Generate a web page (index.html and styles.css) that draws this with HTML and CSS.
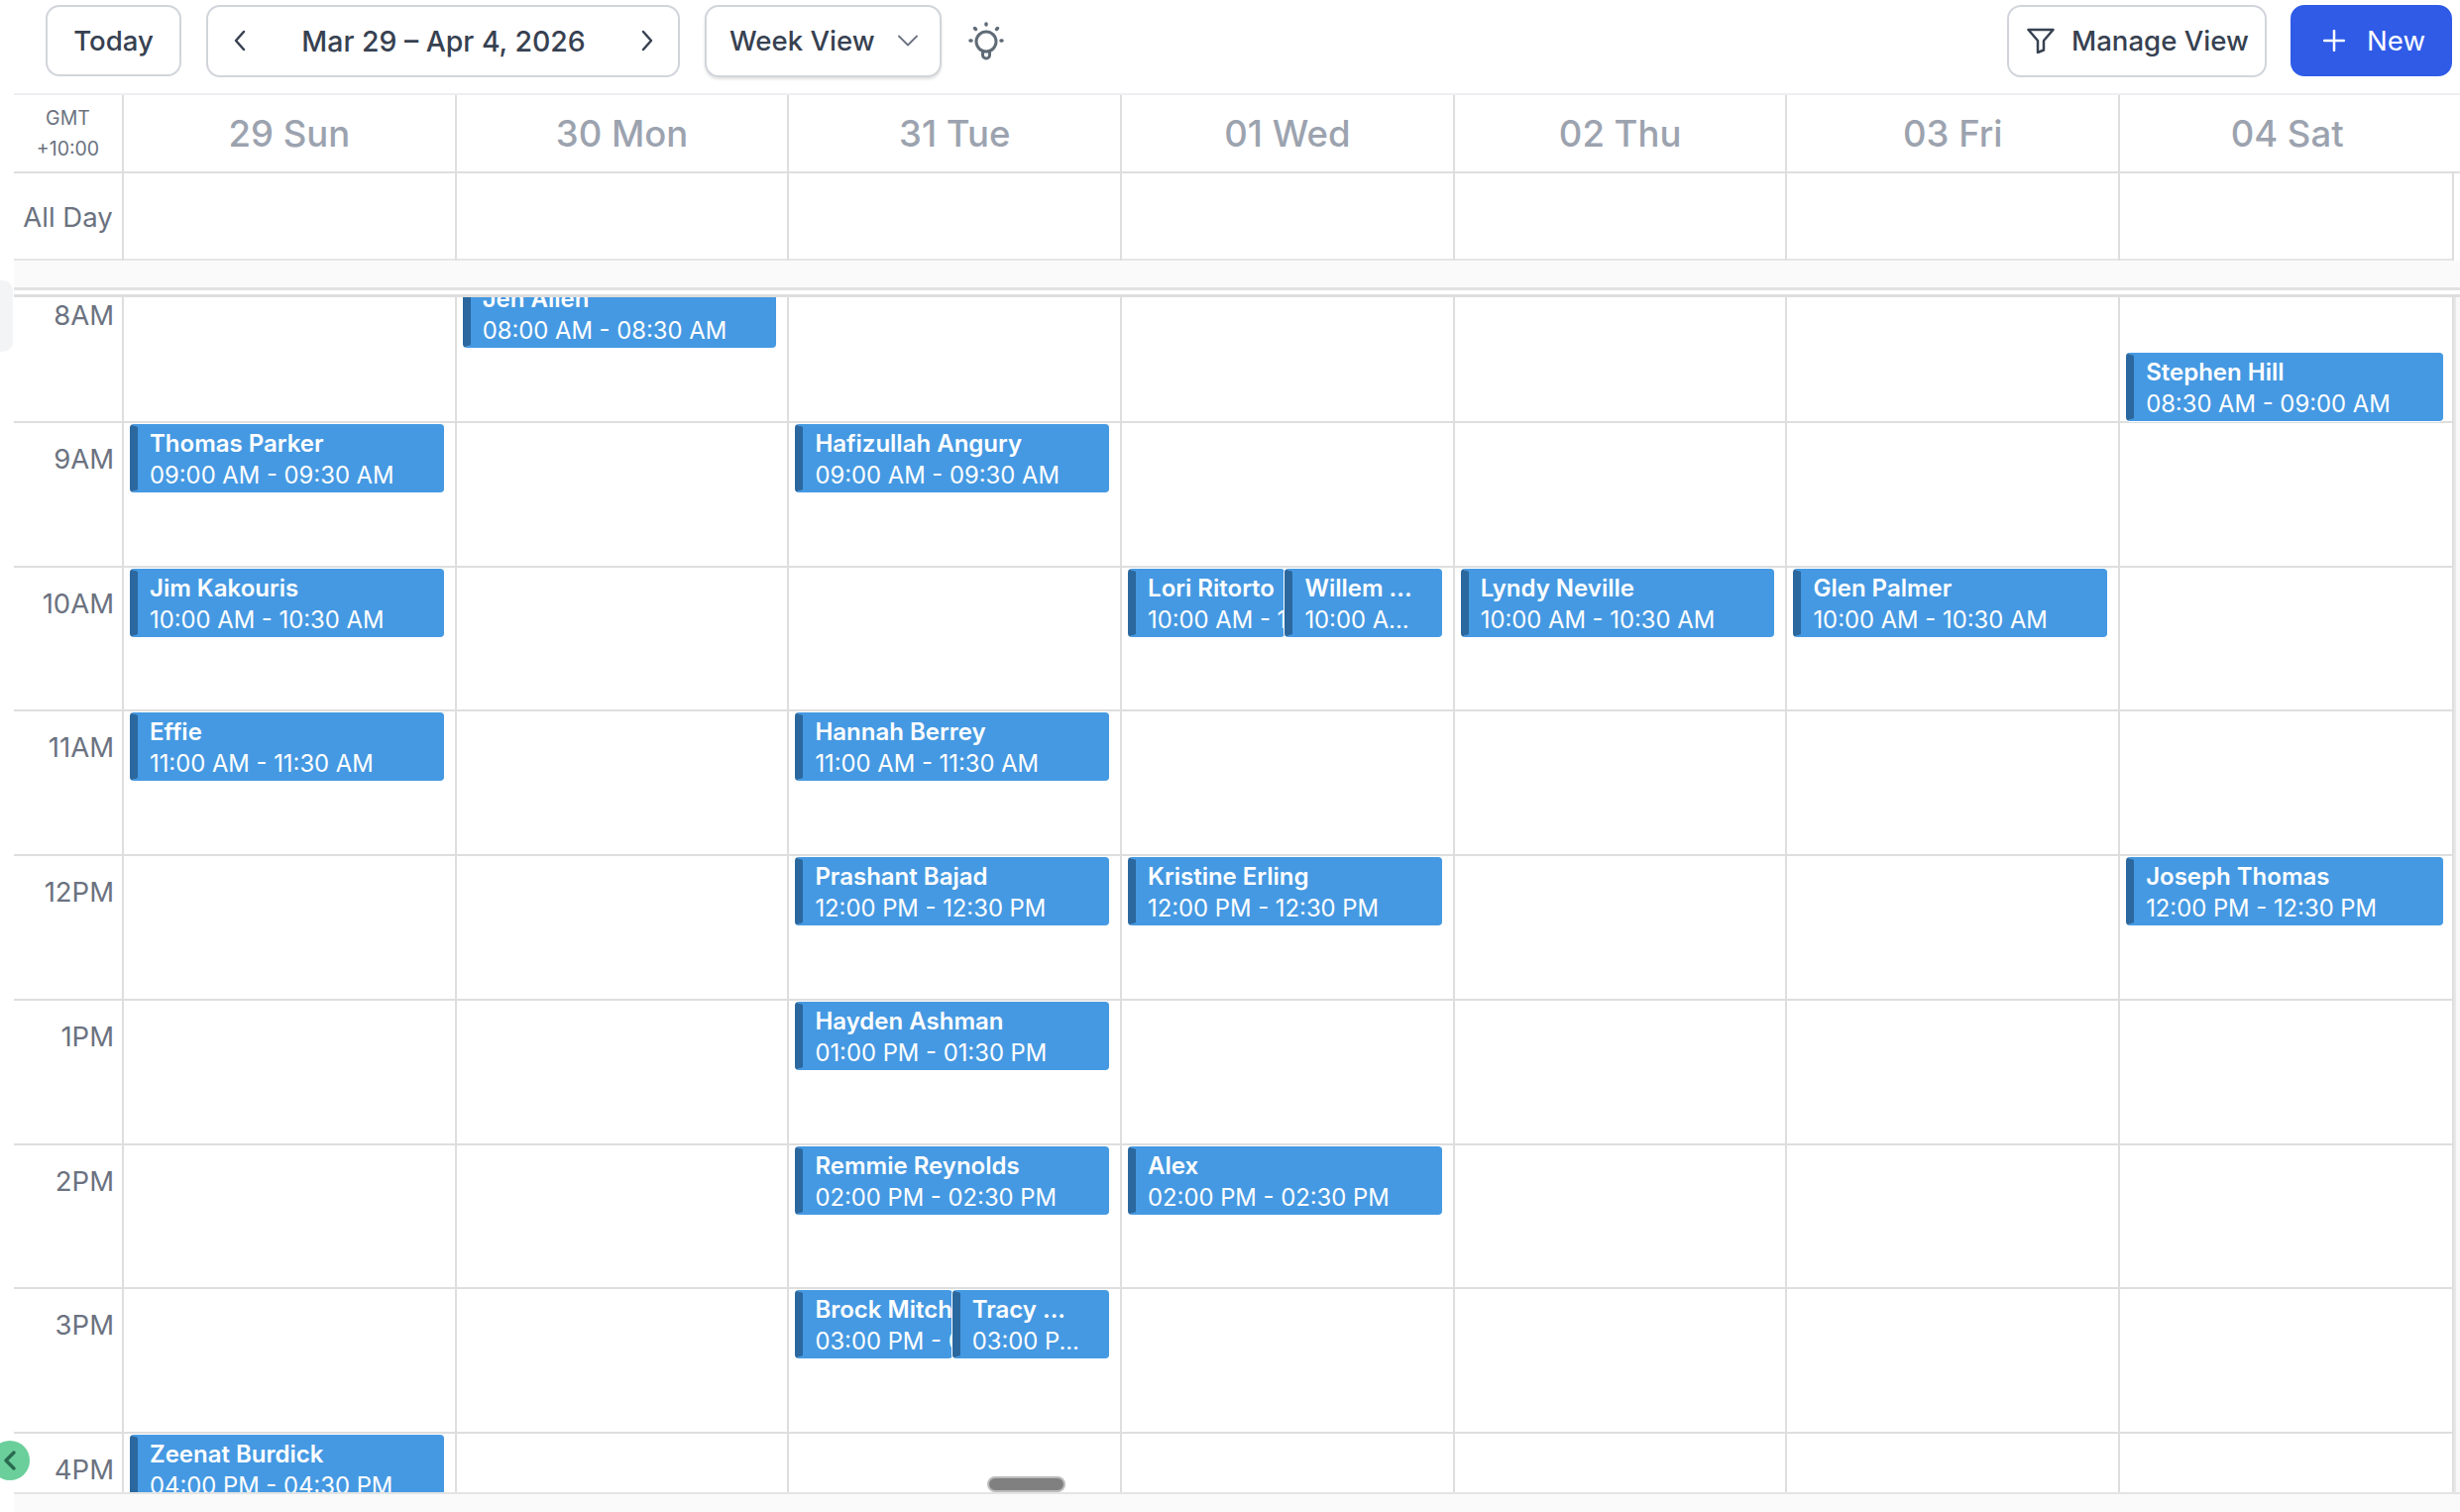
FILE: index.html
```html
<!DOCTYPE html>
<html lang="en">
<head>
<meta charset="utf-8">
<title>Week View</title>
<link rel="stylesheet" href="styles.css">
</head>
<body>
<div class="app">
  <header class="toolbar">
    <button class="btn today">Today</button>
    <div class="btn range">
      <svg class="chev" width="12" height="22" viewBox="0 0 12 22"><path d="M10 2 2 11l8 9"/></svg>
      <span>Mar 29 – Apr 4, 2026</span>
      <svg class="chev" width="12" height="22" viewBox="0 0 12 22"><path d="M2 2l8 9-8 9"/></svg>
    </div>
    <div class="btn view">
      <span>Week View</span>
      <svg class="caret" width="20" height="12" viewBox="0 0 20 12"><path d="M1 1.500 10 10.500 19 1.500"/></svg>
    </div>
    <svg class="bulb" width="36" height="44" viewBox="0 0 36 44">
      <circle cx="18" cy="23" r="10"/>
      <path d="M14.500 33.500v3a3.500 3.500 0 0 0 7 0v-3"/>
      <path class="ray" d="M18 5v1M6.500 9.500l1 1M29.500 9.500l-1 1M2 22h1M33 22h1"/>
    </svg>
    <div class="spacer"></div>
    <div class="btn manage">
      <svg class="funnel" width="28" height="26" viewBox="0 0 28 26"><path d="M1.500 2h25L17 13v9.500l-6 2.500V13z"/></svg>
      <span>Manage View</span>
    </div>
    <button class="btn new">
      <svg class="plus" width="22" height="22" viewBox="0 0 22 22"><path d="M11 1v20M1 11h20"/></svg>
      <span>New</span>
    </button>
  </header>

  <div class="week-head grid">
    <div class="gmt">GMT<br>+10:00</div>
    <div class="day">29 Sun</div>
    <div class="day">30 Mon</div>
    <div class="day">31 Tue</div>
    <div class="day">01 Wed</div>
    <div class="day">02 Thu</div>
    <div class="day">03 Fri</div>
    <div class="day last">04 Sat</div>
  </div>

  <div class="all-day grid">
    <div class="allday-label">All Day</div>
    <div class="c"></div><div class="c"></div><div class="c"></div><div class="c"></div><div class="c"></div><div class="c"></div><div class="c"></div>
  </div>

  <div class="band"></div>

  <div class="time-scroll">
    <div class="time-grid">

      <div class="row grid">
        <div class="hour first">8AM</div>
        <div class="c"></div>
        <div class="c"><div class="ev"><b>Jen Allen</b><span>08:00 AM - 08:30 AM</span></div></div>
        <div class="c"></div><div class="c"></div><div class="c"></div><div class="c"></div>
        <div class="c half"><div class="ev"><b>Stephen Hill</b><span>08:30 AM - 09:00 AM</span></div></div>
      </div>

      <div class="row grid">
        <div class="hour">9AM</div>
        <div class="c"><div class="ev"><b>Thomas Parker</b><span>09:00 AM - 09:30 AM</span></div></div>
        <div class="c"></div>
        <div class="c"><div class="ev"><b>Hafizullah Angury</b><span>09:00 AM - 09:30 AM</span></div></div>
        <div class="c"></div><div class="c"></div><div class="c"></div><div class="c"></div>
      </div>

      <div class="row grid">
        <div class="hour">10AM</div>
        <div class="c"><div class="ev"><b>Jim Kakouris</b><span>10:00 AM - 10:30 AM</span></div></div>
        <div class="c"></div><div class="c"></div>
        <div class="c"><div class="ev"><b>Lori Ritorto</b><span>10:00 AM - 10:30 AM</span></div><div class="ev"><b>Willem ...</b><span>10:00 A...</span></div></div>
        <div class="c"><div class="ev"><b>Lyndy Neville</b><span>10:00 AM - 10:30 AM</span></div></div>
        <div class="c"><div class="ev"><b>Glen Palmer</b><span>10:00 AM - 10:30 AM</span></div></div>
        <div class="c"></div>
      </div>

      <div class="row grid">
        <div class="hour">11AM</div>
        <div class="c"><div class="ev"><b>Effie</b><span>11:00 AM - 11:30 AM</span></div></div>
        <div class="c"></div>
        <div class="c"><div class="ev"><b>Hannah Berrey</b><span>11:00 AM - 11:30 AM</span></div></div>
        <div class="c"></div><div class="c"></div><div class="c"></div><div class="c"></div>
      </div>

      <div class="row grid">
        <div class="hour">12PM</div>
        <div class="c"></div><div class="c"></div>
        <div class="c"><div class="ev"><b>Prashant Bajad</b><span>12:00 PM - 12:30 PM</span></div></div>
        <div class="c"><div class="ev"><b>Kristine Erling</b><span>12:00 PM - 12:30 PM</span></div></div>
        <div class="c"></div><div class="c"></div>
        <div class="c"><div class="ev"><b>Joseph Thomas</b><span>12:00 PM - 12:30 PM</span></div></div>
      </div>

      <div class="row grid">
        <div class="hour">1PM</div>
        <div class="c"></div><div class="c"></div>
        <div class="c"><div class="ev"><b>Hayden Ashman</b><span>01:00 PM - 01:30 PM</span></div></div>
        <div class="c"></div><div class="c"></div><div class="c"></div><div class="c"></div>
      </div>

      <div class="row grid">
        <div class="hour">2PM</div>
        <div class="c"></div><div class="c"></div>
        <div class="c"><div class="ev"><b>Remmie Reynolds</b><span>02:00 PM - 02:30 PM</span></div></div>
        <div class="c"><div class="ev"><b>Alex</b><span>02:00 PM - 02:30 PM</span></div></div>
        <div class="c"></div><div class="c"></div><div class="c"></div>
      </div>

      <div class="row grid">
        <div class="hour">3PM</div>
        <div class="c"></div><div class="c"></div>
        <div class="c"><div class="ev"><b>Brock Mitchell</b><span>03:00 PM - 03:30 PM</span></div><div class="ev"><b>Tracy ...</b><span>03:00 P...</span></div></div>
        <div class="c"></div><div class="c"></div><div class="c"></div><div class="c"></div>
      </div>

      <div class="row grid">
        <div class="hour">4PM</div>
        <div class="c"><div class="ev"><b>Zeenat Burdick</b><span>04:00 PM - 04:30 PM</span></div></div>
        <div class="c"></div><div class="c"></div><div class="c"></div><div class="c"></div><div class="c"></div><div class="c"></div>
      </div>

    </div>
    <div class="track"></div>
  </div>

  <div class="foot"></div>

  <div class="handle"></div>
  <div class="collapse"><svg width="14" height="22" viewBox="0 0 14 22"><path d="M11 3 3 11l8 8"/></svg></div>
  <div class="pill"></div>
</div>
</body>
</html>
```

FILE: styles.css
```css
* { box-sizing: border-box; }
html, body { margin: 0; height: 100%; background: #fff; }
body { font-family: Inter, "Noto Sans", sans-serif; overflow: hidden; }

.app { position: relative; width: 2482px; height: 1526px; padding-left: 14px; overflow: hidden; display: flex; flex-direction: column; }

/* toolbar */
.toolbar { height: 94px; flex: none; display: flex; align-items: center; padding: 0 8px 12px 32px; gap: 25px; }
.btn { height: 72px; display: flex; align-items: center; background: #fff; border: 2px solid #d1d5db; border-radius: 14px; font: 500 27.600px Inter, sans-serif; color: #374151; }
.today { width: 137px; justify-content: center; padding: 0; }
.range { width: 478px; justify-content: space-between; padding: 0 25px 0 26px; height: 73px; font-size: 28.400px; }
.view { width: 239px; padding: 0 22px 0 23px; justify-content: space-between; height: 73px; box-shadow: 0 2px 3px rgba(0,0,0,.12); }
.chev path, .caret path { fill: none; stroke: #374151; stroke-width: 2.500; stroke-linecap: round; stroke-linejoin: round; }
.caret path { stroke: #6b7280; stroke-width: 1.800; }
.bulb { margin-left: 2px; }
.bulb circle, .bulb path { fill: none; stroke: #5f6b76; stroke-width: 3; stroke-linecap: round; }
.bulb .ray { stroke-width: 3.500; }
.spacer { flex: 1; }
.manage { width: 262px; padding-left: 18px; gap: 17px; margin-right: -1px; height: 73px; }
.funnel path { fill: none; stroke: #374151; stroke-width: 2.500; stroke-linejoin: round; }
.new { width: 163px; background: #2f5be7; border-color: #2f5be7; color: #fff; font-weight: 400; padding-left: 31px; gap: 22px; }
.plus path { fill: none; stroke: #fff; stroke-width: 2.500; stroke-linecap: round; }

/* grid */
.grid { display: grid; grid-template-columns: 111px repeat(6, 335.700px) 337px; }

.week-head { height: 81px; flex: none; border-top: 2px solid #eeeef2; border-bottom: 2px solid #dedede; }
.gmt { font-size: 19.500px; line-height: 31px; color: #6b7280; text-align: center; border-right: 2px solid #dedede; padding-top: 8px; }
.day { font-size: 36.500px; font-weight: 500; color: #9ca3af; display: flex; align-items: center; justify-content: center; border-right: 2px solid #dedede; }
.day.last { border-right: 0; }

.all-day { height: 88px; flex: none; width: 2462px; border-bottom: 2px solid #e6e6e6; }
.allday-label { font-size: 27.500px; color: #6b7280; text-align: center; line-height: 88px; border-right: 2px solid #dedede; }
.c { border-right: 2px solid #dedede; min-width: 0; }

.band { height: 30px; flex: none; background: #fafafa; border-bottom: 3px solid #e2e2e2; }

.time-scroll { flex: 1; min-height: 0; margin-top: 4px; border-top: 3px solid #dedede; display: flex; overflow: hidden; }
.time-grid { width: 2462px; flex: none; margin-top: -19px; }
.track { flex: 1; background: #f8f8f8; border-left: 2px solid #e8e8e8; }

.row { height: 145.750px; border-bottom: 2px solid #dedede; }
.hour { font-size: 27.500px; color: #6b7280; text-align: right; padding: 20px 8px 0 0; border-right: 2px solid #dedede; line-height: 32px; }
.hour.first { padding-top: 21px; }
.c { display: flex; padding: 1px 11px 0 6px; }
.c:last-child { padding-right: 9px; }
.c.half { padding-top: 75px; }

.ev { flex: 1 1 0; min-width: 0; height: 69px; display: flex; flex-direction: column; overflow: hidden; position: relative; background: #4599e2; border-left: 8px solid #2b689f; border-top: 3px solid #4599e2; border-bottom: 3px solid #4599e2; border-radius: 4px; box-shadow: 0 0 0 1px #fff; padding-left: 12px; color: #fff; white-space: nowrap; }
.ev b { font-size: 24px; font-weight: 600; line-height: 31px; margin-top: 1px; }
.ev span { font-size: 23.800px; font-weight: 400; line-height: 31px; margin-top: 1px; }

.foot { height: 20px; flex: none; background: #fafafa; border-top: 2px solid #e4e4e4; }

/* overlays */
.handle { position: absolute; left: 0; top: 283px; width: 13px; height: 72px; background: #f3f4f6; border-radius: 0 10px 10px 0; }
.collapse { position: absolute; left: -10px; top: 1454px; width: 40px; height: 40px; border-radius: 50%; background: #6bcf9b; display: flex; align-items: center; justify-content: center; }
.collapse path { fill: none; stroke: #2a6b50; stroke-width: 3.500; stroke-linecap: round; stroke-linejoin: round; }
.pill { position: absolute; left: 996px; top: 1490px; width: 79px; height: 16px; border-radius: 8px; background: #808080; border: 2px solid #bbb; }
```
